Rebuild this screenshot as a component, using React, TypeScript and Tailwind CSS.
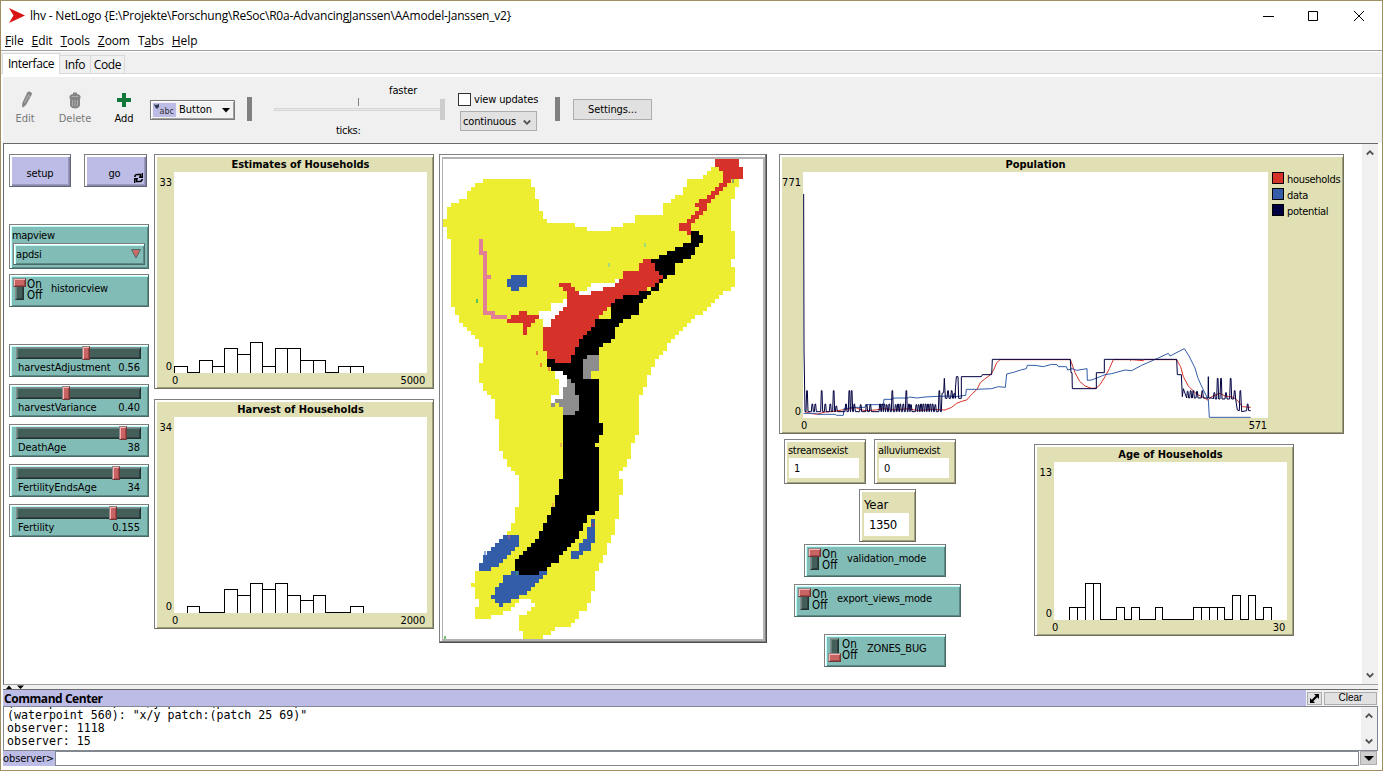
import React from "react";

type Box = { x: number; y: number; w: number; h: number };
const place = (b: Box) => ({ left: b.x - 4, top: b.y - 144, width: b.w, height: b.h });

const TEAL =
  "absolute border border-t-[#808080] border-l-[#808080] border-r-[#4a6b68] border-b-[#4a6b68] bg-[#82bcb6] shadow-[inset_1px_1px_0_#fff,inset_2px_2px_0_#b9fffb,inset_-1px_-1px_0_#5e8a86]";
const KHAKI =
  "absolute border border-t-[#808080] border-l-[#808080] border-r-[#70705a] border-b-[#70705a] bg-[#e0e0b4] shadow-[inset_1px_1px_0_#fff,inset_2px_2px_0_#fff,inset_-1px_-1px_0_#a0a080]";
const LILAC =
  "absolute flex items-center justify-center border border-t-[#808080] border-l-[#808080] border-r-[#63637a] border-b-[#63637a] bg-[#bcbce6] pt-[5px] shadow-[inset_1px_1px_0_#fff,inset_2px_2px_0_#fff,inset_-1px_-1px_0_#8585a6,inset_-2px_-2px_0_#9a9ac0]";
const SANS = "font-['DejaVu_Sans_Condensed','DejaVu_Sans',sans-serif] text-[11px] leading-[13px] whitespace-nowrap";

function Slider({ y, label, value, knob }: { y: number; label: string; value: string; knob: number }) {
  return (
    <div className={TEAL} style={place({ x: 9, y, w: 140, h: 33 })}>
      <div className="relative ml-[6px] mt-[2px] h-[12px] w-[125px] border border-b-[#24332f] border-l-[#8a8a8a] border-r-[#24332f] border-t-[#8a8a8a] bg-[#445e5a] shadow-[inset_1px_1px_0_#5f8581,inset_-1px_-1px_0_#2f423f]">
        <div
          className="absolute top-[-2px] h-[14px] w-[8px] border border-b-[#703838] border-l-[#8a8a8a] border-r-[#703838] border-t-[#8a8a8a] bg-[#c86464] shadow-[inset_1px_1px_0_#ffb0b0,inset_-1px_-1px_0_#a04848]"
          style={{ left: knob - 21 }}
        />
      </div>
      <div className="flex justify-between pl-2 pr-[8px] pt-[2px]">
        <span className="tracking-[-0.1px]">{label}</span>
        <span className="tracking-[-0.1px]">{value}</span>
      </div>
    </div>
  );
}

function Switch({ box, label, on, labelX }: { box: Box; label: string; on: boolean; labelX: number }) {
  const shell = "border border-b-[#703838] border-l-[#8a8a8a] border-r-[#703838] border-t-[#8a8a8a] bg-[#c86464] shadow-[inset_1px_1px_0_#ffb0b0,inset_-1px_-1px_0_#a04848]";
  return (
    <div className={TEAL} style={place(box)}>
      <div className="absolute left-[5px] top-[3px] h-[22px] w-[9px] border border-b-[#24332f] border-l-[#8a8a8a] border-r-[#24332f] border-t-[#8a8a8a] bg-[#445e5a] shadow-[inset_1px_1px_0_#5f8581,inset_-1px_-1px_0_#2f423f]" />
      <div className={`absolute left-[3px] h-[9px] w-[13px] ${on ? "top-[3px]" : "top-[18px]"} ${shell}`} />
      <div className="absolute left-[17px] top-[4px] text-[11.500px] leading-[11px] tracking-normal">
        On
        <br />
        Off
      </div>
      <div className="absolute top-[7px]" style={{ left: labelX - box.x - 1 }}>{label}</div>
    </div>
  );
}

function Monitor({ box, label, value, big }: { box: Box; label: string; value: string; big?: boolean }) {
  return (
    <div className={`${KHAKI} ${big ? "pl-1 pt-[7px] text-[13px] leading-[16px] tracking-[-0.1px]" : "pl-[3px] pt-[4px] tracking-[-0.3px]"}`} style={place(box)}>
      <div>{label}</div>
      <div className={big ? "flex h-[23px] w-[45px] items-center bg-white pl-[5px] tracking-[-0.5px]" : "ml-px mt-px flex h-[20px] w-[70px] items-center bg-white pl-[5px]"}>
        {value}
      </div>
    </div>
  );
}

function Plot({ box, title, area, yMax, xMax, xRight, legend, children }: {
  box: Box; title: string; area: Box; yMax: string; xMax: string; xRight: number; legend?: React.ReactNode; children: React.ReactNode;
}) {
  const gutter = area.x - box.x - 1;
  return (
    <div className={`${KHAKI} flex flex-col`} style={place(box)}>
      <div
        className="flex h-[17px] items-center justify-center pt-[2px] font-bold tracking-normal"
        style={{ marginLeft: gutter, width: area.w }}
      >
        {title}
      </div>
      <div className="flex" style={{ height: area.h }}>
        <div className="flex flex-col items-end justify-between pb-0 pr-[2px] pt-[4px] tracking-normal" style={{ width: gutter }}>
          <span>{yMax}</span>
          <span>0</span>
        </div>
        <div className="bg-white" style={{ width: area.w }}>{children}</div>
        {legend}
      </div>
      <div className="flex justify-between pt-[1px]" style={{ paddingLeft: gutter - 2, paddingRight: xRight }}>
        <span>0</span>
        <span>{xMax}</span>
      </div>
    </div>
  );
}

function Histogram({ w, h, step, unit, counts }: { w: number; h: number; step: number; unit: number; counts: (number | null)[] }) {
  const floor = h - 0.5;
  const edge = (i: number) => Math.round(i * step) + 0.5;
  const d = counts
    .map((n, i) => (n === null ? "" : `M${edge(i)} ${floor + 0.5}V${Math.round(h - 1 - n * unit) + 0.5}H${edge(i + 1)}V${floor + 0.5}`))
    .join("");
  return (
    <svg width={w} height={h} className="block" shapeRendering="crispEdges">
      <path d={d} fill="none" stroke="#000" />
    </svg>
  );
}

const BASIN =
  "M10 5H22V7H23V10H24V13H25V15H26V16H33V17H36V18H42V17H45V16H48V14H55V11H57V10H58V9H60V7H61V5H65V4H66V3H67V2H74V7H73V10H72V18H73V25H72V27H73V32H72V33H70V34H69V35H68V36H67V37H66V38H65V39H63V40H62V41H61V42H60V43H59V44H58V45H57V46H56V48H55V49H54V50H53V52H52V54H51V57H50V59H49V69H48V71H47V75H46V77H45V78H44V80H45V84H44V90H43V94H42V96H41V99H40V101H39V103H38V108H37V111H36V113H34V115H33V116H32V117H28V118H27V119H25V120H20V118H19V114H21V113H22V112H23V111H22V110H19V111H18V112H17V113H15V114H12V115H8V112H9V110H8V107H7V106H8V103H12V99H16V93H17V91H18V87H19V79H18V78H17V77H16V75H15V73H14V65H13V60H12V59H11V58H10V56H9V51H10V47H9V45H8V44H7V43H6V42H5V41H4V39H3V37H2V20H1V17H0V15H1V12H2V11H4V10H6V8H7V7H8V6H10Z";
const GAPS =
  "M43 30H44V31H43V32H40V33H37V34H34V33H36V32H37V31H43ZM30 35H31V37H30V38H29V39H28V40H27V42H25V40H24V38H27V36H30ZM28 53H30V54H31V57H30V60H28V61H27V59H29V55H28Z";
const WATER =
  "M17 103H26V104H25V105H24V106H23V107H22V108H21V109H19V110H17V111H15V112H14V111H13V110H12V109H13V107H14V106H15V104H17ZM15 94H19V97H18V98H17V99H16V100H15V101H14V102H12V103H9V101H10V99H11V98H12V97H13V96H14V95H15ZM37 90H38V96H37V98H35V99H34V100H32V98H34V96H35V95H36V92H37ZM17 29H21V32H19V33H17V32H16V30H17Z";
const VALLEY =
  "M62 18H64V19H65V21H64V22H63V24H62V25H60V26H58V29H56V30H55V31H54V33H52V34H51V35H50V36H49V39H47V40H45V41H44V42H43V45H42V46H40V47H39V53H37V55H39V66H40V69H39V71H38V72H39V88H38V89H36V91H35V93H34V95H33V96H32V97H31V98H30V99H29V101H27V102H26V103H24V104H19V103H18V100H19V99H20V98H21V97H22V96H23V95H24V93H25V91H26V89H27V87H28V84H29V80H30V64H33V56H32V55H31V54H30V53H27V52H26V49H32V40H42V33H52V25H54V24H56V23H58V22H60V21H62Z";
const ROCK = "M31 55H32V56H33V59H34V63H33V64H30V62H29V61H28V62H27V61H28V60H30V57H31ZM36 49H39V53H37V55H35V50H36Z";
const UPLAND =
  "M29 31H32V32H33V33H34V34H37V33H40V32H43V31H44V30H45V28H49V26H50V25H52V26H53V28H54V29H55V30H54V31H53V32H51V33H49V34H45V35H43V36H42V37H41V38H40V39H39V40H38V42H37V43H36V44H35V45H34V47H33V49H32V51H28V50H26V48H25V42H27V40H28V39H29V38H30V37H31V33H30V32H29ZM19 38H21V39H24V40H23V41H22V42H21V44H20V41H16V40H17V39H19ZM68 0H74V2H75V5H72V6H71V7H70V8H69V9H68V10H67V11H66V13H65V14H64V15H63V16H62V19H61V18H59V16H61V15H62V14H63V13H64V12H63V11H64V10H66V9H67V8H68V7H69V6H70V3H69V2H68Z";
const CREEK = "M9 20H10V23H11V29H12V30H11V38H13V39H16V40H12V39H10V24H9Z";
const AGENTS: [number, number, string][] = [
  [476, 299, "#59c25f"], [536, 351, "#e88b2e"], [540, 363, "#e88b2e"], [548, 367, "#e88b2e"],
  [732, 179, "#93a36c"], [644, 243, "#a2dc78"], [608, 263, "#a2dc78"], [560, 443, "#e8b24c"],
  [552, 503, "#e8b24c"], [592, 523, "#7a3f7a"], [508, 535, "#7a5a9c"], [484, 551, "#8fabd4"],
  [516, 571, "#3a8877"], [444, 636, "#6bc46b"],
];

function WorldView() {
  return (
    <div
      className="absolute border border-b-[#4d4d4d] border-l-[#808080] border-r-[#4d4d4d] border-t-[#808080] bg-white shadow-[inset_-1px_-1px_0_#808080]"
      style={place({ x: 439, y: 154, w: 328, h: 489 })}
    >
      <div className="ml-[2px] mt-[2px] h-[484px] w-[323px] border-b-2 border-l border-r-2 border-t-2 border-[#b2b2b2] bg-white">
        <svg width="320" height="480" viewBox="0 0 80 120" className="block" shapeRendering="crispEdges">
          <path d={BASIN} fill="#eded31" />
          <path d={GAPS} fill="#fff" />
          <path d={WATER} fill="#335da9" />
          <path d={VALLEY} fill="#000" />
          <path d={ROCK} fill="#8d8d8d" />
          <path d={UPLAND} fill="#d73229" />
          <path d={CREEK} fill="#e07f96" />
          {AGENTS.map(([x, y, c]) => (
            <rect key={`${x}-${y}`} x={(x - 443) / 4} y={(y - 159) / 4} width={0.5} height={1} fill={c} />
          ))}
        </svg>
      </div>
    </div>
  );
}

// Each spike is [centre, peak]; the trace returns to the floor between them.
const spikes = (list: [number, number][], floor: number) =>
  list.map(([x, p]) => `${x - 3},${floor} ${x - 1},${p} ${x + 1},${p} ${x + 3},${floor}`).join(" ");

const POTENTIAL = [
  "86,132 87,600 90,785",
  spikes([[96, 722], [112, 762], [121, 762], [140, 722], [151, 762], [166, 762], [176, 722], [184, 768], [213, 762], [223, 722], [230, 722], [238, 762], [257, 764], [275, 764], [286, 764], [315, 762], [322, 762], [328, 762], [335, 764], [343, 762], [352, 722], [362, 764], [369, 762], [376, 762], [385, 762], [394, 722], [402, 762], [408, 764], [424, 764], [431, 764], [438, 762], [445, 762], [452, 762], [459, 762], [466, 762], [473, 762], [481, 764], [493, 722]], 785),
  "499,785 501,730 506,728 508,685 511,745",
  spikes([[519, 722], [530, 722], [538, 730]], 745),
  "541,720 544,680 549,680 551,745 559,745 559,680 619,680 622,674 650,674 652,628 886,628 888,668 891,668 892,716 964,716 964,668 988,668 988,628 1205,628 1207,674 1219,674 1222,740 1225,716",
  spikes([[1238, 724], [1247, 722], [1255, 722], [1266, 724], [1282, 722]], 744),
  "1299,744 1300,680 1301,744 1312,744",
  spikes([[1318, 728], [1328, 685], [1338, 685], [1353, 728], [1367, 685], [1379, 722]], 747),
  "1387,780 1393,782 1395,722 1397,722 1400,785",
  spikes([[1418, 762]], 782),
  "1427,782",
].join(" ");
const HOUSEHOLDS =
  "90,785 105,790 125,793 150,786 180,784 200,780 225,776 240,772 255,778 270,782 300,780 330,776 360,780 400,776 430,782 470,778 510,780 530,772 545,760 560,754 575,750 590,733 606,718 616,698 628,688 645,675 656,660 665,638 675,629 886,629 893,648 900,668 914,694 930,708 950,715 964,714 975,704 990,680 1003,656 1015,629 1065,629 1067,632 1069,629 1105,632 1107,629 1205,629 1212,642 1217,650 1225,680 1240,708 1252,720 1266,733 1285,742 1298,750 1310,740 1335,730 1350,738 1375,742 1390,754 1402,770 1427,772";
const RECORDED =
  "86,790 125,790 127,793 180,793 185,796 205,796 207,775 222,775 225,772 270,772 272,764 325,764 327,748 352,748 354,744 400,744 403,741 426,744 450,741 490,739 520,738 540,740 572,736 574,718 605,718 650,716 670,710 691,712 695,672 715,667 737,660 754,656 757,646 780,646 805,650 830,643 846,644 850,650 874,650 878,660 891,656 905,661 936,656 937,691 950,690 990,674 1010,671 1050,660 1070,662 1100,646 1150,624 1180,610 1185,618 1228,596 1242,618 1260,654 1268,682 1278,705 1300,750 1303,802 1427,802";

function Swatch({ color, name }: { color: string; name: string }) {
  return (
    <div className="flex h-4 items-center">
      <span className="mr-[3px] h-[12px] w-[12px] shrink-0 border border-black" style={{ background: color }} />
      <span className="pt-[2px] tracking-[-0.3px]">{name}</span>
    </div>
  );
}

function Chevron({ up }: { up?: boolean }) {
  return (
    <svg width="8" height="7" viewBox="0 0 8 7" className="block">
      <path d={up ? "M.8 5.5L4 2.2L7.2 5.5" : "M.8 1.5L4 4.8L7.2 1.5"} fill="none" stroke="#505050" strokeWidth="1.8" />
    </svg>
  );
}

function TitleBar() {
  return (
    <div className="flex h-[29px] items-center bg-white pl-[8px] font-['Open_Sans','Noto_Sans',sans-serif]">
      <svg width="17" height="16" viewBox="0 0 17 16" className="mr-[4px]"><path d="M0 0L16 7.5L0 15L4.5 7.5Z" fill="#d81414" /></svg>
      <span className="whitespace-nowrap text-[12px] tracking-[-0.19px] text-black">
        lhv - NetLogo {"{E:\\Projekte\\Forschung\\ReSoc\\R0a-AdvancingJanssen\\AAmodel-Janssen_v2}"}
      </span>
      <svg width="112" height="12" viewBox="0 0 112 12" className="ml-auto mr-[13px]" fill="none" stroke="#000">
        <path d="M6 6.5H17M51.500 1.500H60.500V10.500H51.500ZM97 1L107 11M107 1L97 11" />
      </svg>
    </div>
  );
}

function MenuBar() {
  const items = ["File", "Edit", "Tools", "Zoom", "Tabs", "Help"];
  return (
    <div className="flex h-[20px] items-center gap-[8px] bg-white pl-1 font-['Open_Sans','Noto_Sans',sans-serif] text-[12px] tracking-[-0.1px]">
      {items.map((name) => {
        const key = name === "Tabs" ? 1 : 0;
        return (
          <span key={name}>
            {name.slice(0, key)}
            <u>{name[key]}</u>
            {name.slice(key + 1)}
          </span>
        );
      })}
    </div>
  );
}

function Toolbar() {
  return (
    <div className="ml-[2px] flex h-[66px] bg-[#f0f0f0]">
      <div className="flex h-full w-[44px] flex-col items-center pt-[14px] text-[#787878]">
        <svg width="12" height="17" viewBox="0 0 12 17" className="ml-[4px]">
          <path d="M6.500 1L8.500 .5L11 2L10.500 4L5 14L2 16.500L1 15.500L1.500 11.500Z" fill="#858585" />
          <path d="M7 4.500L9 5.500M8 3.500L3.500 12" stroke="#b8b8b8" />
        </svg>
        <span className="mt-[4px]">Edit</span>
      </div>
      <div className="flex h-full w-[56px] flex-col items-center pt-[15px] text-[#787878]">
        <svg width="12" height="17" viewBox="0 0 12 17">
          <path d="M4 2V.5H8V2L10 2.500L11.500 4V6L11 7V14Q9 16.500 6 16.500Q3 16.500 1 14V7L.5 6V4L2 2.500Z" fill="#858585" />
          <path d="M3.500 8V14M6 8V14.500M8.500 8V14M2.500 4.500H9.500" stroke="#ababab" />
        </svg>
        <span className="mt-[3px]">Delete</span>
      </div>
      <div className="flex h-full w-[42px] flex-col items-center pt-[15px]">
        <svg width="14" height="17" viewBox="0 0 14 17"><path d="M5 1H9V6H14V10H9V15H5V10H0V6H5Z" fill="#14783a" /></svg>
        <span className="mt-[3px]">Add</span>
      </div>
      <div className="ml-[5px] mt-[23px] flex h-[20px] w-[85px] items-center border border-[#7a7a7a] bg-[#f2f2f2] shadow-[inset_1px_1px_0_#fff,inset_-1px_-1px_0_#a0a0a0]">
        <div className="ml-[2px] flex h-[14px] w-[23px] items-end justify-end bg-[#bcbce6] pr-[2px] font-['DejaVu_Sans',sans-serif] text-[8px] leading-[10px] text-[#333]">
          <svg width="6" height="6" className="mb-[7px]"><path d="M0 0L2 1L5 0L5 3L3 5L1 3Z" fill="#333a55" /></svg>abc
        </div>
        <span className="mb-[1px] ml-[3px]">Button</span>
        <svg width="8" height="5" className="ml-auto mr-[4px]"><path d="M0 0H8L4 4.500Z" fill="#000" /></svg>
      </div>
      <div className="ml-[12px] mt-[20px] h-[24px] w-[5px] bg-[#808080]" />
      <div className="relative ml-[22px] w-[171px]">
        <div className="mt-[31px] h-[3px] w-[168px] border border-[#d6d6d6] bg-[#e7eaea]" />
        <div className="absolute left-[166px] top-[22px] h-[21px] w-[5px] bg-[#cdcdcd]" />
        <div className="absolute left-[84px] top-[21px] h-[8px] w-px bg-[#808080]" />
        <span className="absolute left-[115px] top-[7px] tracking-[-0.1px]">faster</span>
        <span className="absolute left-[62px] top-[47px] tracking-[-0.3px]">ticks:</span>
      </div>
      <div className="ml-[13px] w-[97px] pt-[16px] tracking-[-0.15px]">
        <div className="flex items-center gap-[3px]"><span className="h-[13px] w-[13px] border border-[#333] bg-white" />view updates</div>
        <div className="ml-[2px] mt-[5px] flex h-[20px] w-[77px] items-center border border-[#adadad] bg-[#e1e1e1] pl-[2px]">
          continuous<span className="ml-auto mr-[5px] mt-[3px]"><Chevron /></span>
        </div>
      </div>
      <div className="mt-[20px] h-[24px] w-[5px] bg-[#808080]" />
      <div className="ml-[13px] mt-[22px] flex h-[21px] w-[79px] items-center justify-center border border-[#adadad] bg-[#e1e1e1] tracking-[-0.1px]">Settings...</div>
    </div>
  );
}

function Model() {
  return (
    <div className="relative h-[540px] flex-1 bg-white tracking-[-0.18px]">
      <div className={LILAC} style={place({ x: 9, y: 154, w: 62, h: 33 })}>setup</div>
      <div className={LILAC} style={place({ x: 84, y: 154, w: 63, h: 33 })}>
        <span className="mr-[2px]">go</span>
        <svg width="9" height="10" viewBox="0 0 9 10" className="absolute bottom-[3px] right-[3px]" fill="none" stroke="#000" strokeWidth="1.600">
          <path d="M1 4V3Q1.500 1.500 3 1.500H6.500V4M8.500 0V4.200H5M8 6V7Q7.500 8.500 6 8.500H2.500V6M.5 10V5.800H4" />
        </svg>
      </div>
      <div className={TEAL} style={place({ x: 9, y: 224, w: 140, h: 45 })}>
        <div className="pl-[2px] pt-[4px] tracking-[-0.3px]">mapview</div>
        <div className="ml-[3px] mt-[1px] flex h-[22px] w-[132px] items-center justify-between border border-b-[#4a6b68] border-l-[#808080] border-r-[#4a6b68] border-t-[#808080] pl-[2px] pr-[3px] shadow-[inset_1px_1px_0_#fff,inset_2px_2px_0_#b9fffb,inset_-1px_-1px_0_#5e8a86]">
          apdsi
          <svg width="10" height="10"><path d="M.5 .5H9.500L5 9Z" fill="#d06868" stroke="#4a6b68" /></svg>
        </div>
      </div>
      <Switch box={{ x: 9, y: 274, w: 140, h: 33 }} label="historicview" on labelX={51} />
      <Slider y={344} label="harvestAdjustment" value="0.56" knob={86} />
      <Slider y={384} label="harvestVariance" value="0.40" knob={66} />
      <Slider y={424} label="DeathAge" value="38" knob={123} />
      <Slider y={464} label="FertilityEndsAge" value="34" knob={116} />
      <Slider y={504} label="Fertility" value="0.155" knob={113} />

      <Plot box={{ x: 154, y: 154, w: 280, h: 235 }} title="Estimates of Households" area={{ x: 174, y: 172, w: 253, h: 201 }} yMax="33" xMax="5000" xRight={8}>
        <Histogram w={253} h={201} step={12.6} unit={6.05} counts={[1, 0, 2, 1, 4, 3, 5, 1, 4, 4, 2, 2, 0, 1, 1]} />
      </Plot>
      <Plot box={{ x: 154, y: 399, w: 280, h: 230 }} title="Harvest of Households" area={{ x: 174, y: 417, w: 253, h: 196 }} yMax="34" xMax="2000" xRight={8}>
        <Histogram w={253} h={196} step={12.6} unit={5.8} counts={[null, 1, 0, 0, 4, 3, 5, 4, 5, 3, 2, 3, 0, 0, 1]} />
      </Plot>
      <WorldView />
      <Plot
        box={{ x: 779, y: 154, w: 565, h: 280 }}
        title="Population"
        area={{ x: 803, y: 172, w: 465, h: 246 }}
        yMax="771"
        xMax="571"
        xRight={76}
        legend={
          <div className="-mt-[2px] pl-1">
            <Swatch color="#d73229" name="households" />
            <Swatch color="#335da9" name="data" />
            <Swatch color="#000040" name="potential" />
          </div>
        }
      >
        <svg width="465" height="246" viewBox="84 66 1395 738" className="block" fill="none" strokeWidth="3">
          <polyline points={HOUSEHOLDS} stroke="#d73229" />
          <polyline points={RECORDED} stroke="#335da9" />
          <polyline points={POTENTIAL} stroke="#000040" strokeLinejoin="bevel" />
        </svg>
      </Plot>
      <Monitor box={{ x: 784, y: 439, w: 82, h: 45 }} label="streamsexist" value="1" />
      <Monitor box={{ x: 874, y: 439, w: 82, h: 45 }} label="alluviumexist" value="0" />
      <Monitor box={{ x: 859, y: 489, w: 57, h: 53 }} label="Year" value="1350" big />
      <Switch box={{ x: 804, y: 544, w: 142, h: 33 }} label="validation_mode" on labelX={847} />
      <Switch box={{ x: 794, y: 584, w: 167, h: 33 }} label="export_views_mode" on labelX={837} />
      <Switch box={{ x: 824, y: 634, w: 122, h: 33 }} label="ZONES_BUG" on={false} labelX={867} />
      <Plot box={{ x: 1034, y: 444, w: 260, h: 192 }} title="Age of Households" area={{ x: 1054, y: 462, w: 233, h: 158 }} yMax="13" xMax="30" xRight={8}>
        <Histogram w={233} h={158} step={7.74} unit={12} counts={[null, null, 1, 1, 3, 3, 0, 0, 1, 0, 1, 0, 0, 1, 0, 0, 0, 0, 1, 1, 1, 1, 0, 2, 0, 2, 0, 1]} />
      </Plot>
    </div>
  );
}

function CommandCenter() {
  return (
    <div className="ml-[2px] mr-1 flex h-[80px] flex-col">
      <div className="flex h-[16px] items-center bg-[#f0f0f0] font-['Open_Sans','Noto_Sans',sans-serif] text-[12px]">
        <div className="flex h-full flex-1 items-center bg-[#bcbce6] pl-px font-bold tracking-[-0.45px]">Command Center</div>
        <div className="ml-px flex h-[13px] w-[15px] items-center justify-center border border-[#adadad] bg-[#e1e1e1]">
          <svg width="9" height="9" viewBox="0 0 9 9"><path d="M4 0H9V5L7.300 3.300L3.300 7.300L5 9H0V4L1.700 5.700L5.700 1.700Z" fill="#000" /></svg>
        </div>
        <div className="ml-[2px] mr-px flex h-[13px] w-[53px] items-center justify-center border border-[#adadad] bg-[#e1e1e1] pb-[2px] font-['Liberation_Sans',sans-serif] text-[10px]">Clear</div>
      </div>
      <div className="flex h-[45px] border border-[#828790] bg-white">
        <div className="flex h-full flex-1 flex-col justify-end overflow-hidden whitespace-pre pb-[2px] pl-[3px] font-['DejaVu_Sans_Mono',monospace] text-[11.600px] leading-[13px]">
          <span>(waterpoint 559): "x/y patch:(patch 25 68)"</span>
          <span>(waterpoint 560): "x/y patch:(patch 25 69)"</span>
          <span>observer: 1118</span>
          <span>observer: 15</span>
        </div>
        <div className="flex w-[16px] flex-col items-center justify-between bg-[#f0f0f0] py-[5px]"><Chevron up /><Chevron /></div>
      </div>
      <div className="flex h-[15px]">
        <div className="flex w-[52px] items-center bg-[#bcbce6] tracking-[-0.1px]">observer&gt;</div>
        <div className="flex-1 border border-[#828790] bg-white" />
        <div className="ml-px mr-px flex h-[14px] w-[17px] items-center justify-center border border-[#adadad] bg-[#cfcfcf]">
          <svg width="10" height="5"><path d="M0 0H10L5 5Z" fill="#000" /></svg>
        </div>
      </div>
    </div>
  );
}

export default function App() {
  return (
    <div className={`flex h-[771px] w-[1383px] flex-col overflow-hidden border border-[#a08f62] bg-white text-black ${SANS}`}>
      <TitleBar />
      <MenuBar />
      <div className="h-px bg-[#a0a0a0]" />
      <div className="mt-px flex h-[22px] items-end border-b border-[#d9d9d9] bg-[#f0f0f0] pl-px font-['Open_Sans','Noto_Sans',sans-serif] text-[12px] tracking-[-0.4px]">
        <div className="-mb-px flex h-[21px] w-[58px] items-center justify-center border border-b-0 border-[#d9d9d9] bg-white pb-[2px]">Interface</div>
        <div className="flex h-[18px] w-[31px] items-center justify-center border border-b-0 border-l-0 border-[#d9d9d9]">Info</div>
        <div className="flex h-[18px] w-[34px] items-center justify-center border border-b-0 border-l-0 border-[#d9d9d9]">Code</div>
      </div>
      <div className="h-[3px] bg-white" />
      <Toolbar />
      <div className="ml-[2px] mr-[4px] flex h-[542px] border-b border-l border-t border-b-[#a0a0a0] border-l-[#696969] border-t-[#696969]">
        <Model />
        <div className="flex w-[16px] flex-col items-center justify-between bg-[#f0f0f0] pb-[5px] pt-[5px]"><Chevron up /><Chevron /></div>
      </div>
      <div className="ml-[2px] mr-1 h-[5px] border-b border-[#696969] bg-[#f0f0f0]">
        <svg width="20" height="4" className="ml-[3px] block"><path d="M0 4L3 .5L6 4ZM11 .5H18L14.500 4Z" fill="#000" /></svg>
      </div>
      <CommandCenter />
    </div>
  );
}
